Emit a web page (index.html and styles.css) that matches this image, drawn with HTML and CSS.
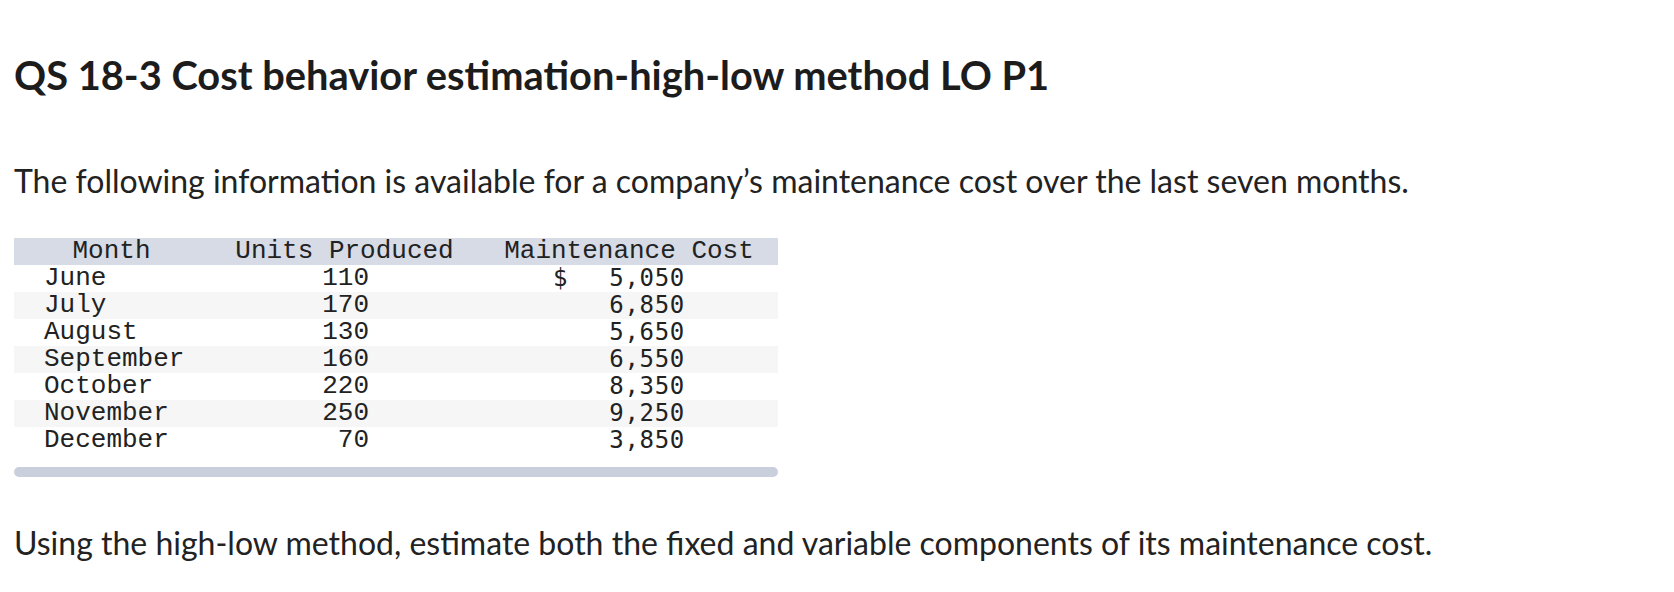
FILE: index.html
```html
<!DOCTYPE html>
<html>
<head>
<meta charset="utf-8">
<link rel="stylesheet" href="styles.css">
</head>
<body>
<div class="page">
  <h1 class="title">QS 18-3 Cost behavior estimation-high-low method LO P1</h1>
  <p class="text intro">The following information is available for a company’s maintenance cost over the last seven months.</p>
  <div class="table-wrap">
    <table class="data">
      <thead>
        <tr><th class="c1">Month</th><th class="c2">Units Produced</th><th class="c3">Maintenance Cost</th></tr>
      </thead>
      <tbody>
        <tr><td class="m">June</td><td class="u">110</td><td class="cost"><span class="cur">$</span><span class="num">5,050</span></td></tr>
        <tr class="alt"><td class="m">July</td><td class="u">170</td><td class="cost"><span class="cur"></span><span class="num">6,850</span></td></tr>
        <tr><td class="m">August</td><td class="u">130</td><td class="cost"><span class="cur"></span><span class="num">5,650</span></td></tr>
        <tr class="alt"><td class="m">September</td><td class="u">160</td><td class="cost"><span class="cur"></span><span class="num">6,550</span></td></tr>
        <tr><td class="m">October</td><td class="u">220</td><td class="cost"><span class="cur"></span><span class="num">8,350</span></td></tr>
        <tr class="alt"><td class="m">November</td><td class="u">250</td><td class="cost"><span class="cur"></span><span class="num">9,250</span></td></tr>
        <tr><td class="m">December</td><td class="u">70</td><td class="cost"><span class="cur"></span><span class="num">3,850</span></td></tr>
      </tbody>
    </table>
    <div class="scrollbar"></div>
  </div>
  <p class="text outro">Using the high-low method, estimate both the fixed and variable components of its maintenance cost.</p>
</div>
</body>
</html>
```

FILE: styles.css
```css
html, body {
  margin: 0;
  padding: 0;
  background: #ffffff;
}

.page {
  padding: 48px 14px 0 14px;
  color: #222222;
  font-family: "Lato", "Liberation Sans", sans-serif;
}

.title {
  margin: 0;
  font-size: 39.8px;
  font-weight: 700;
  line-height: 54px;
  color: #1c1c1c;
}

.text {
  margin: 0;
  font-size: 32px;
  line-height: 40px;
}

.intro {
  margin-top: 59px;
}

.table-wrap {
  margin-top: 37px;
  width: 764px;
  display: flex;
  flex-direction: column;
}

.data {
  border-collapse: collapse;
  table-layout: fixed;
  width: 764px;
  font-family: "Liberation Mono", "Courier New", monospace;
  font-size: 26px;
  color: #222222;
}

.data th,
.data td {
  padding: 0;
  height: 27px;
  line-height: 27px;
  white-space: pre;
}

.data th {
  background: #d6dbe6;
  font-weight: 400;
  text-align: center;
}

.c1 { width: 195px; }
.c2 { width: 271px; }
.c3 { width: 298px; }

.data .m {
  text-align: left;
  padding-left: 30px;
}

.data .u {
  text-align: right;
  padding-right: 111px;
}

.data .cost {
  padding-left: 73px;
  padding-right: 93px;
  font-family: "DejaVu Sans Mono", monospace;
  font-size: 24px;
  letter-spacing: 0.7px;
}

.data tr.alt td {
  background: #f6f6f6;
}

.cur {
  float: left;
}

.num {
  float: right;
}

.scrollbar {
  margin-top: 13px;
  height: 10px;
  border-radius: 5px;
  background: #c9cfdc;
}

.outro {
  margin-top: 46px;
}
```
